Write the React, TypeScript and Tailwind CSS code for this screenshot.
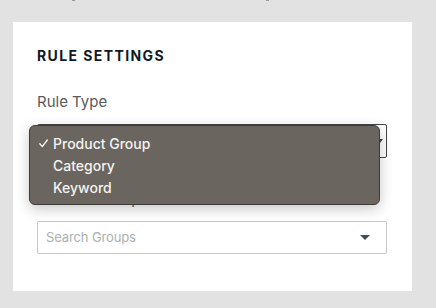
import React from "react";

export default function App() {
  return (
    <div className="w-[436px] h-[308px] bg-[#e2e2e2] pt-[22px] pl-[13px] overflow-hidden relative" style={{ fontFamily: "Inter, 'Noto Sans', sans-serif" }}>
      <div className="absolute left-[72px] top-0 w-[3px] h-[1px] bg-[#9a9a9a]" />
      <div className="absolute left-[266px] top-0 w-[3px] h-[1px] bg-[#9a9a9a]" />
      <div className="w-[399px] h-[269px] bg-white pl-[24px] pr-[25px] pt-[24px] relative">
        <div className="text-[14px] leading-[20px] font-bold tracking-[0.1em] text-[#111827]">RULE SETTINGS</div>
        <div className="mt-[26px] text-[15px] leading-[20px] text-[#5a5a5a]">Rule Type</div>
        <div className="mt-[12px] h-[34px] w-[350px] border border-[#444] rounded-[2px] flex items-center justify-end pr-[3px]">
          <div className="w-0 h-0 border-l-[3px] border-r-[3px] border-t-[4px] border-l-transparent border-r-transparent border-t-[#444]" />
        </div>
        <div className="mt-[31px] text-[15px] leading-[20px] text-[#5a5a5a]">Product Group</div>
        <div className="mt-[12px] h-[33px] w-[350px] border border-[#c8c8c8] rounded-[2px] flex items-center justify-between pl-[8px] pr-[16px]">
          <span className="text-[13px] text-[#a9b1b1] tracking-[-0.01em]">Search Groups</span>
          <div className="w-0 h-0 border-l-[5px] border-r-[5px] border-t-[5px] border-l-transparent border-r-transparent border-t-[#454b55]" />
        </div>

        <div className="absolute left-[16px] top-[103px] w-[351px] h-[80px] rounded-[6px] bg-[#6b655f] border border-[#3e3c3a] shadow-[0_4px_14px_rgba(0,0,0,0.22)] py-[6px]">
          {["Product Group", "Category", "Keyword"].map((t, i) => (
            <div key={t} className="h-[22px] flex items-center text-[14px] font-medium text-[#f4f3f1]">
              <span className="w-[23px] flex items-center pl-[9px]">
                {i === 0 && (
                  <svg width="9" height="9" viewBox="0 0 9 9" fill="none">
                    <path d="M0.8 4.8 L3.3 7.6 L8.3 1" stroke="#f4f3f1" strokeWidth="1.4" strokeLinecap="round" strokeLinejoin="round" />
                  </svg>
                )}
              </span>
              <span>{t}</span>
            </div>
          ))}
        </div>
      </div>
    </div>
  );
}
